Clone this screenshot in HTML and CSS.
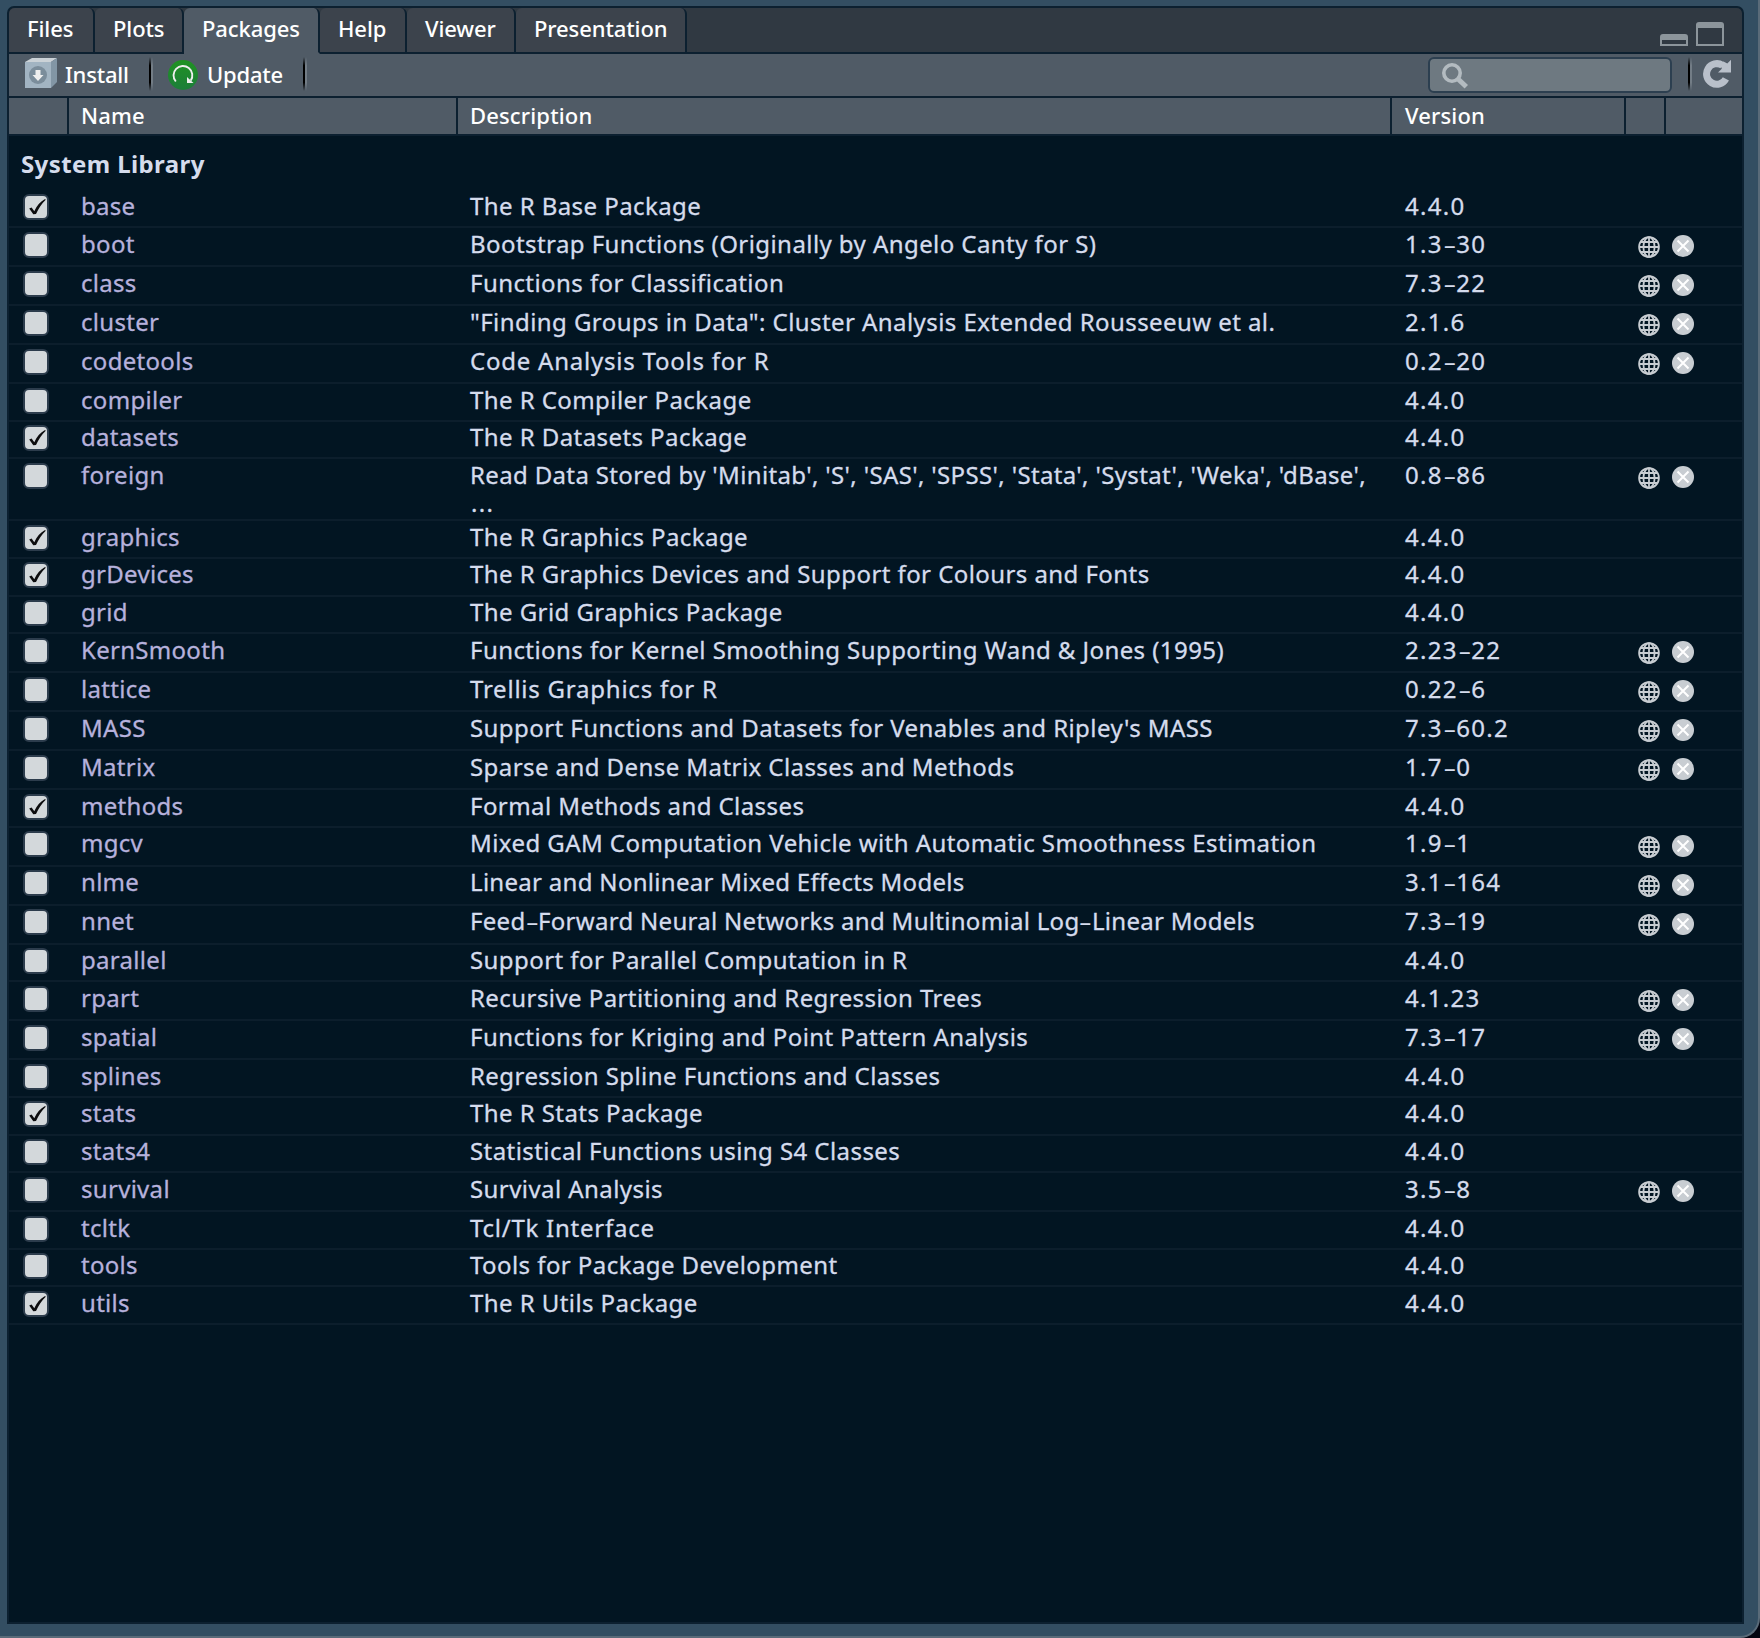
FILE: index.html
```html
<!DOCTYPE html>
<html lang="en">
<head>
<meta charset="utf-8">
<title>Packages</title>
<link rel="stylesheet" href="styles.css">
</head>
<body>
<svg class="defs" width="0" height="0" aria-hidden="true">
  <symbol id="tick" viewBox="0 0 25 25"><path d="M5.2 14.6 7.6 13.4 10.3 17.2C13 11.500 16 7.700 20.600 5.200L22 5.500C17.500 9.500 14.700 14.500 12 20L9.300 20.200Z" fill="#0c0c0e"/></symbol>
  <symbol id="globe" viewBox="0 0 22 22"><g fill="none" stroke="#c8cdd2" stroke-width="1.8"><circle cx="11" cy="11" r="9.900"/><ellipse cx="11" cy="11" rx="5.600" ry="9.900"/><path d="M11 1v20M1 11h20M2.500 6h17M2.500 16h17"/></g></symbol>
  <symbol id="remove" viewBox="0 0 22 22"><circle cx="11" cy="11" r="11" fill="#c8cdd2"/><path d="M5.500 5.500 16.500 16.500M16.500 5.500 5.500 16.500" stroke="#fff" stroke-width="2"/></symbol>
</svg>
<main class="pane">
  <nav class="tabs">
    <a class="tab files">Files</a><a class="tab plots">Plots</a><a class="tab packages active">Packages</a><a class="tab help">Help</a><a class="tab viewer">Viewer</a><a class="tab presentation">Presentation</a>
    <svg class="winbtns" width="64" height="24" viewBox="0 0 64 24"><path fill="#8c959b" fill-rule="evenodd" d="M0 24V15q0-3 3-3H25q3 0 3 3V24ZM2 18V22H26V18ZM36 24V3q0-3 3-3H61q3 0 3 3V24ZM38 6V22H62V6Z"/></svg>
  </nav>
  <div class="toolbar">
    <svg class="ic-install" width="32" height="30" viewBox="0 0 32 30"><path fill="#cbd2d7" d="M0 4 7 0H32L26 4Z"/><path fill="#8296a5" d="M26 4 32 0V24L26 30Z"/><path fill="#a2b4c2" d="M0 4H26V30H0Z"/><circle cx="13" cy="17" r="9" fill="#7b8d9b"/><path fill="#eee" d="M10.500 12h5v5h3l-5.500 6-5.500-6h3Z"/></svg>
    <span class="label install">Install</span><i class="sep"></i>
    <svg class="ic-update" width="30" height="30" viewBox="0 0 30 30"><defs><linearGradient id="green" x1="0" y1="0" x2="0" y2="1"><stop offset="0" stop-color="#209222"/><stop offset="1" stop-color="#1c7e3a"/></linearGradient></defs><circle cx="15" cy="15" r="15" fill="url(#green)"/><path d="M7.800 21.500A9.400 9.400 0 1 1 22.800 20.500" fill="none" stroke="#eee" stroke-width="1.900"/><path d="M19 17v6h6.500Z" fill="#eee"/></svg>
    <span class="label update">Update</span><i class="sep"></i>
    <div class="search"><svg width="27" height="27" viewBox="0 0 27 27"><circle cx="10" cy="10" r="8.200" fill="none" stroke="#b3bbc0" stroke-width="3.600"/><path d="M15.500 15.500 24.300 23.800" stroke="#b3bbc0" stroke-width="5"/></svg></div>
    <i class="sep"></i>
    <svg class="ic-refresh" width="28" height="30" viewBox="0 0 28 30"><path d="M22.900 19.900A10.300 10.300 0 1 1 19.300 6.200" fill="none" stroke="#b9c0ca" stroke-width="7"/><path d="M28 .8V13.600H15L18.800 9.800 17 5 20.500 2.500 24.300 4.400Z" fill="#b9c0ca"/></svg>
  </div>
  <div class="head"><span></span><span>Name</span><span>Description</span><span>Version</span><span></span><span></span></div>
  <div class="list">
    <h2 class="group">System Library</h2>
    <div class="row"><i class="cb"><svg><use href="#tick"/></svg></i><a>base</a><span>The R Base Package</span><b>4.4.0</b></div>
    <div class="row ext"><i class="cb"></i><a>boot</a><span>Bootstrap Functions (Originally by Angelo Canty for S)</span><b>1.3<s>-</s>30</b><svg class="globe"><use href="#globe"/></svg><svg class="del"><use href="#remove"/></svg></div>
    <div class="row ext"><i class="cb"></i><a>class</a><span>Functions for Classification</span><b>7.3<s>-</s>22</b><svg class="globe"><use href="#globe"/></svg><svg class="del"><use href="#remove"/></svg></div>
    <div class="row ext"><i class="cb"></i><a>cluster</a><span>"Finding Groups in Data": Cluster Analysis Extended Rousseeuw et al.</span><b>2.1.6</b><svg class="globe"><use href="#globe"/></svg><svg class="del"><use href="#remove"/></svg></div>
    <div class="row ext wide"><i class="cb"></i><a>codetools</a><span>Code Analysis Tools for R</span><b>0.2<s>-</s>20</b><svg class="globe"><use href="#globe"/></svg><svg class="del"><use href="#remove"/></svg></div>
    <div class="row"><i class="cb"></i><a>compiler</a><span>The R Compiler Package</span><b>4.4.0</b></div>
    <div class="row"><i class="cb"><svg><use href="#tick"/></svg></i><a>datasets</a><span>The R Datasets Package</span><b>4.4.0</b></div>
    <div class="row ext tall"><i class="cb"></i><a>foreign</a><span>Read Data Stored by 'Minitab', 'S', 'SAS', 'SPSS', 'Stata', 'Systat', 'Weka', 'dBase',<br><em>...</em></span><b>0.8<s>-</s>86</b><svg class="globe"><use href="#globe"/></svg><svg class="del"><use href="#remove"/></svg></div>
    <div class="row"><i class="cb"><svg><use href="#tick"/></svg></i><a>graphics</a><span>The R Graphics Package</span><b>4.4.0</b></div>
    <div class="row"><i class="cb"><svg><use href="#tick"/></svg></i><a>grDevices</a><span>The R Graphics Devices and Support for Colours and Fonts</span><b>4.4.0</b></div>
    <div class="row"><i class="cb"></i><a>grid</a><span>The Grid Graphics Package</span><b>4.4.0</b></div>
    <div class="row ext"><i class="cb"></i><a>KernSmooth</a><span>Functions for Kernel Smoothing Supporting Wand &amp; Jones (1995)</span><b>2.23<s>-</s>22</b><svg class="globe"><use href="#globe"/></svg><svg class="del"><use href="#remove"/></svg></div>
    <div class="row ext wide"><i class="cb"></i><a>lattice</a><span>Trellis Graphics for R</span><b>0.22<s>-</s>6</b><svg class="globe"><use href="#globe"/></svg><svg class="del"><use href="#remove"/></svg></div>
    <div class="row ext"><i class="cb"></i><a>MASS</a><span>Support Functions and Datasets for Venables and Ripley's MASS</span><b>7.3<s>-</s>60.2</b><svg class="globe"><use href="#globe"/></svg><svg class="del"><use href="#remove"/></svg></div>
    <div class="row ext"><i class="cb"></i><a>Matrix</a><span>Sparse and Dense Matrix Classes and Methods</span><b>1.7<s>-</s>0</b><svg class="globe"><use href="#globe"/></svg><svg class="del"><use href="#remove"/></svg></div>
    <div class="row"><i class="cb"><svg><use href="#tick"/></svg></i><a>methods</a><span>Formal Methods and Classes</span><b>4.4.0</b></div>
    <div class="row ext"><i class="cb"></i><a>mgcv</a><span>Mixed GAM Computation Vehicle with Automatic Smoothness Estimation</span><b>1.9<s>-</s>1</b><svg class="globe"><use href="#globe"/></svg><svg class="del"><use href="#remove"/></svg></div>
    <div class="row ext tight"><i class="cb"></i><a>nlme</a><span>Linear and Nonlinear Mixed Effects Models</span><b>3.1<s>-</s>164</b><svg class="globe"><use href="#globe"/></svg><svg class="del"><use href="#remove"/></svg></div>
    <div class="row ext tight"><i class="cb"></i><a>nnet</a><span>Feed<s>-</s>Forward Neural Networks and Multinomial Log<s>-</s>Linear Models</span><b>7.3<s>-</s>19</b><svg class="globe"><use href="#globe"/></svg><svg class="del"><use href="#remove"/></svg></div>
    <div class="row"><i class="cb"></i><a>parallel</a><span>Support for Parallel Computation in R</span><b>4.4.0</b></div>
    <div class="row ext"><i class="cb"></i><a>rpart</a><span>Recursive Partitioning and Regression Trees</span><b>4.1.23</b><svg class="globe"><use href="#globe"/></svg><svg class="del"><use href="#remove"/></svg></div>
    <div class="row ext"><i class="cb"></i><a>spatial</a><span>Functions for Kriging and Point Pattern Analysis</span><b>7.3<s>-</s>17</b><svg class="globe"><use href="#globe"/></svg><svg class="del"><use href="#remove"/></svg></div>
    <div class="row"><i class="cb"></i><a>splines</a><span>Regression Spline Functions and Classes</span><b>4.4.0</b></div>
    <div class="row"><i class="cb"><svg><use href="#tick"/></svg></i><a>stats</a><span>The R Stats Package</span><b>4.4.0</b></div>
    <div class="row"><i class="cb"></i><a>stats4</a><span>Statistical Functions using S4 Classes</span><b>4.4.0</b></div>
    <div class="row ext"><i class="cb"></i><a>survival</a><span>Survival Analysis</span><b>3.5<s>-</s>8</b><svg class="globe"><use href="#globe"/></svg><svg class="del"><use href="#remove"/></svg></div>
    <div class="row wide"><i class="cb"></i><a>tcltk</a><span>Tcl/Tk Interface</span><b>4.4.0</b></div>
    <div class="row"><i class="cb"></i><a>tools</a><span>Tools for Package Development</span><b>4.4.0</b></div>
    <div class="row"><i class="cb"><svg><use href="#tick"/></svg></i><a>utils</a><span>The R Utils Package</span><b>4.4.0</b></div>
  </div>
</main>
</body>
</html>
```
FILE: styles.css
```css
* { box-sizing: border-box; }
html { background: #02040f; }
body {
  margin: 0;
  width: 1760px;
  height: 1638px;
  padding: 6px 14px 12px 7px;
  background: #334e62;
  border-right: 2px solid #5a6b79;
  border-bottom: 2px solid #5a6b79;
  border-bottom-right-radius: 20px;
  font-family: "Noto Sans", "Open Sans", sans-serif;
  overflow: hidden;
}
.defs { position: absolute; }
.pane {
  width: 1737px;
  height: 1618px;
  display: flex;
  flex-direction: column;
  background: #021522;
  border: 2px solid #0c2030;
  border-radius: 7px 7px 0 0;
  overflow: hidden;
}

.tabs {
  display: flex;
  height: 46px;
  flex: none;
  background: linear-gradient(#0c2030, #0c2030) bottom / 100% 2px no-repeat #303942;
}
.tab {
  height: 46px;
  padding-left: 18px;
  background: #3c434c;
  border-right: 2px solid #0c2030;
  border-bottom: 2px solid #0c2030;
  border-radius: 6px 6px 0 0;
  color: #fff;
  font-size: 22px;
  font-weight: 500;
  line-height: 41px;
  letter-spacing: -0.1px;
  white-space: nowrap;
  background-clip: padding-box;
}
.tab.active { background: #505b66; border-bottom-color: #505b66; background-clip: padding-box; }
.files { width: 86px; }
.plots { width: 89px; }
.packages { width: 136px; }
.help { width: 87px; }
.viewer { width: 109px; }
.presentation { width: 171px; }
.winbtns { margin: 14px 18px 0 auto; }

.toolbar {
  display: flex;
  align-items: flex-start;
  height: 44px;
  flex: none;
  background: #505b66;
  border-bottom: 2px solid #0c2030;
}
.ic-install { margin: 4px 0 0 16px; }
.label {
  color: #fff;
  font-size: 22px;
  font-weight: 500;
  line-height: 40px;
  letter-spacing: -0.2px;
}
.install { width: 84px; margin-left: 8px; }
.update { width: 96px; margin-left: 9px; }
.sep {
  width: 4px;
  height: 34px;
  margin-top: 3px;
  background:
    linear-gradient(transparent, #000 25%, #000 75%, transparent) left / 2px 100% no-repeat,
    linear-gradient(transparent, #737d86 25%, #737d86 75%, transparent) right / 2px 100% no-repeat;
}
.ic-update { margin: 6px 0 0 15px; }
.search {
  width: 244px;
  height: 36px;
  margin: 3px 16px 0 auto;
  padding: 4px 0 0 12px;
  background: #6e7981;
  border: 2px solid #2c3f50;
  border-radius: 6px;
}
.ic-refresh { margin: 5px 11px 0 11px; }

.head {
  display: grid;
  grid-template-columns: 60px 389px 934px 234px 40px 76px;
  height: 38px;
  flex: none;
  background: #505b66;
  border-bottom: 2px solid #0c2030;
}
.head span {
  padding-left: 12px;
  border-right: 2px solid #0c2030;
  color: #fff;
  font-size: 22px;
  font-weight: 500;
  line-height: 35px;
  letter-spacing: 0.15px;
}
.head span:nth-child(4) { padding-left: 13px; }
.head span:last-child { border-right: 0; }

.group {
  height: 54.6px;
  margin: 0;
  padding-left: 12px;
  color: #d5dced;
  font-size: 24px;
  font-weight: 700;
  line-height: 55px;
  letter-spacing: 0.4px;
}
.row {
  display: grid;
  grid-template-columns: 72px 389px 935px 233px 34px auto;
  height: 37.6px;
  padding-top: 1.500px;
  border-bottom: 2px solid #0c1e2c;
  color: #d5dced;
  font-size: 24px;
  line-height: 28px;
  letter-spacing: 0.43px;
  white-space: nowrap;
  -webkit-text-stroke: 0.3px;
}
.row.ext { height: 39px; }
.row.tall { height: 62px; }
.row.tight span { letter-spacing: 0.3px; }
.row.tall span { letter-spacing: 0.35px; }
.row.wide span { letter-spacing: 0.77px; }
.row a { color: #b6b1dc; letter-spacing: 0.3px; }
.row b { font-weight: 400; letter-spacing: 1.3px; }
.row em { font-style: normal; letter-spacing: 1.3px; padding-left: 1px; }
.row s { display: inline-block; width: 13.500px; text-decoration: none; text-align: center; transform: scaleX(1.7); letter-spacing: 0; -webkit-text-stroke: 0; }
.row span s { width: 12.500px; }
.cb {
  width: 26px;
  height: 26px;
  margin: 2px 0 0 14px;
  background: #d3d8db;
  border: 2px solid #2c3c4c;
  border-radius: 6px;
}
.cb svg { display: block; width: 25px; height: 25px; margin: -2px 0 0 -1.500px; overflow: visible; }
.globe, .del { width: 22px; height: 22px; }
.globe { margin-top: 6.500px; }
.del { margin-top: 5.500px; }
```
